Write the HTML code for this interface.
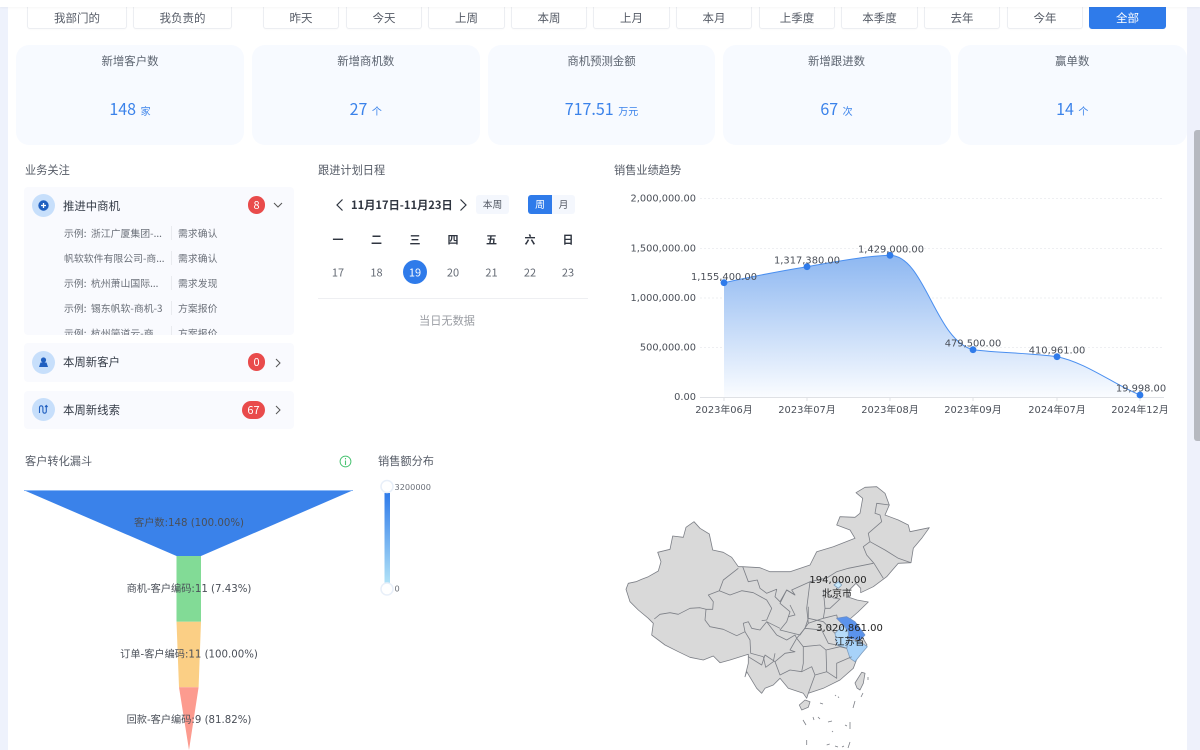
<!DOCTYPE html>
<html lang="zh"><head><meta charset="utf-8"><title>Dashboard</title>
<style>
html,body{margin:0;padding:0;width:1200px;height:750px;overflow:hidden;background:#fff}
body{position:relative;font-family:"Noto Sans CJK SC","Liberation Sans",sans-serif;color:#555b66}
.a{position:absolute;white-space:nowrap}
.c{position:absolute;white-space:nowrap;transform:translate(-50%,-50%);line-height:1}
.btn{position:absolute;top:-8px;height:37px;background:#fff;border:1px solid #eceef2;border-radius:3px;box-sizing:border-box;font-size:11.5px;color:#555b66;text-align:center;line-height:50px;box-shadow:0 1px 1px rgba(0,0,0,.02)}
.card{position:absolute;top:45px;height:100px;background:#f7faff;border-radius:13px}
.card .t{position:absolute;top:8px;left:0;right:0;text-align:center;font-size:11.4px;line-height:16px;color:#5c6470}
.card .n{position:absolute;top:52px;left:0;right:0;text-align:center;font-size:16px;line-height:22px;color:#3a82ea}
.card .n span{font-size:10px;margin-left:1px}
.h{position:absolute;font-size:11.2px;line-height:14px;color:#555b66;white-space:nowrap}
.panel{position:absolute;left:24px;width:270px;background:#f9fafe;border-radius:4px;overflow:hidden}
.ic{position:absolute;left:8px;width:23px;height:23px;border-radius:50%;background:#c7dffb}
.pt{position:absolute;left:39px;font-size:11.4px;line-height:16px;color:#333a46;white-space:nowrap}
.bd{position:absolute;height:18px;border-radius:9px;background:#e94b4b;color:#fff;font-size:11px;line-height:18px;text-align:center}
.r{position:absolute;left:40px;font-size:9.9px;line-height:14px;color:#6b7079;white-space:nowrap}
.s{position:absolute;left:154px;font-size:9.9px;line-height:14px;color:#6b7079;white-space:nowrap}
.d{position:absolute;left:147px;width:1px;height:14px;background:#e9ebef}
.wk{font-size:11px;font-weight:700;color:#2f3540}
.dt{font-size:11px;color:#666c76}
</style></head><body>

<!-- page gutters -->
<div class="a" style="left:0;top:7px;width:8px;height:743px;background:#eef2fc"></div>
<div class="a" style="left:1186.500px;top:7px;width:13.500px;height:743px;background:#eef1fb"></div>
<div class="a" style="left:1193.500px;top:130px;width:6.500px;height:311px;background:#b6b9c0;border-radius:3px 0 0 3px"></div>

<!-- buttons -->
<div class="btn" style="left:27px;width:100px">我部门的</div>
<div class="btn" style="left:133px;width:99px">我负责的</div>
<div class="btn" style="left:263px;width:76px">昨天</div>
<div class="btn" style="left:346px;width:76px">今天</div>
<div class="btn" style="left:428px;width:77px">上周</div>
<div class="btn" style="left:511px;width:76px">本周</div>
<div class="btn" style="left:593px;width:77px">上月</div>
<div class="btn" style="left:676px;width:76px">本月</div>
<div class="btn" style="left:759px;width:76px">上季度</div>
<div class="btn" style="left:841px;width:77px">本季度</div>
<div class="btn" style="left:924px;width:76px">去年</div>
<div class="btn" style="left:1007px;width:76px">今年</div>
<div class="btn" style="left:1089px;width:77px;background:#2f7bea;border-color:#2f7bea;color:#fff">全部</div>
<div class="a" style="left:0;top:0;width:1200px;height:7px;background:#fff;box-shadow:0 1px 2px rgba(0,0,0,.04)"></div>

<!-- stat cards -->
<div class="card" style="left:16px;width:228px"><div class="t">新增客户数</div><div class="n">148 <span>家</span></div></div>
<div class="card" style="left:252px;width:227.500px"><div class="t">新增商机数</div><div class="n">27 <span>个</span></div></div>
<div class="card" style="left:488px;width:227px"><div class="t">商机预测金额</div><div class="n">717.51 <span>万元</span></div></div>
<div class="card" style="left:722.500px;width:228px"><div class="t">新增跟进数</div><div class="n">67 <span>次</span></div></div>
<div class="card" style="left:958px;width:228.500px"><div class="t">赢单数</div><div class="n">14 <span>个</span></div></div>

<!-- business focus -->
<div class="h" style="left:25px;top:163px">业务关注</div>
<div class="panel" style="top:187px;height:148px">
  <div class="ic" style="top:7px"><svg width="23" height="23" viewBox="0 0 23 23"><circle cx="11.500" cy="11.500" r="5.200" fill="#1f5fc0"/><path d="M11.500 9v5M9 11.500h5" stroke="#fff" stroke-width="1.300"/></svg></div>
  <div class="pt" style="top:11px">推进中商机</div>
  <div class="bd" style="left:224px;top:9px;width:17px">8</div>
  <svg class="a" style="left:248px;top:13px" width="12" height="10" viewBox="0 0 12 10"><path d="M2 3l4 4 4-4" fill="none" stroke="#555" stroke-width="1"/></svg>
  <div class="r" style="top:39px">示例:&nbsp;&nbsp;浙江广厦集团-...</div><div class="d" style="top:39px"></div><div class="s" style="top:39px">需求确认</div>
  <div class="r" style="top:64px">帆软软件有限公司-商...</div><div class="d" style="top:64px"></div><div class="s" style="top:64px">需求确认</div>
  <div class="r" style="top:89px">示例:&nbsp;&nbsp;杭州萧山国际...</div><div class="d" style="top:89px"></div><div class="s" style="top:89px">需求发现</div>
  <div class="r" style="top:114px">示例:&nbsp;&nbsp;锡东帆软-商机-3</div><div class="d" style="top:114px"></div><div class="s" style="top:114px">方案报价</div>
  <div class="r" style="top:139px">示例:&nbsp;&nbsp;杭州简道云-商...</div><div class="d" style="top:139px"></div><div class="s" style="top:139px">方案报价</div>
</div>
<div class="panel" style="top:343px;height:39px">
  <div class="ic" style="top:8px"><svg width="23" height="23" viewBox="0 0 23 23"><circle cx="11.500" cy="9" r="2.600" fill="#1f5fc0"/><path d="M7 16l1.500-4.500h6L16 16z" fill="#1f5fc0"/></svg></div>
  <div class="pt" style="top:11px">本周新客户</div>
  <div class="bd" style="left:224px;top:10px;width:17px">0</div>
  <svg class="a" style="left:248px;top:14px" width="12" height="12" viewBox="0 0 12 12"><path d="M4 2l4 4-4 4" fill="none" stroke="#555" stroke-width="1"/></svg>
</div>
<div class="panel" style="top:391px;height:38px">
  <div class="ic" style="top:7px"><svg width="23" height="23" viewBox="0 0 23 23"><path d="M7.500 15V9.500a1.700 1.700 0 0 1 3.400 0v4a1.700 1.700 0 0 0 3.400 0V8M13 9l1.300-1.500L15.600 9" fill="none" stroke="#1f5fc0" stroke-width="1.100"/></svg></div>
  <div class="pt" style="top:11px">本周新线索</div>
  <div class="bd" style="left:218px;top:10px;width:23px">67</div>
  <svg class="a" style="left:248px;top:13px" width="12" height="12" viewBox="0 0 12 12"><path d="M4 2l4 4-4 4" fill="none" stroke="#555" stroke-width="1"/></svg>
</div>

<!-- calendar -->
<div class="h" style="left:318px;top:163px">跟进计划日程</div>
<svg class="a" style="left:334px;top:197px" width="12" height="16" viewBox="0 0 12 16"><path d="M8.500 2.500L3 8l5.500 5.500" fill="none" stroke="#2f3540" stroke-width="1.200"/></svg>
<div class="a" style="left:351px;top:197px;font-size:11.200px;line-height:16px;font-weight:700;color:#2f3540">11月17日-11月23日</div>
<svg class="a" style="left:457px;top:197px" width="12" height="16" viewBox="0 0 12 16"><path d="M3.500 2.500L9 8l-5.500 5.500" fill="none" stroke="#2f3540" stroke-width="1.200"/></svg>
<div class="a" style="left:476px;top:195px;width:33px;height:19px;background:#f4f7fd;border-radius:3px;font-size:9.800px;line-height:19px;text-align:center;color:#555b66">本周</div>
<div class="a" style="left:552px;top:195px;width:23px;height:19px;background:#f4f7fd;border-radius:0 3px 3px 0;font-size:9.800px;line-height:19px;text-align:center;color:#555b66">月</div>
<div class="a" style="left:528px;top:195px;width:24px;height:19px;background:#2f7bea;border-radius:3px 0 0 3px;font-size:9.800px;line-height:19px;text-align:center;color:#fff">周</div>
<div class="c wk" style="left:338px;top:240px">一</div>
<div class="c wk" style="left:376.500px;top:240px">二</div>
<div class="c wk" style="left:415px;top:240px">三</div>
<div class="c wk" style="left:453px;top:240px">四</div>
<div class="c wk" style="left:491.500px;top:240px">五</div>
<div class="c wk" style="left:530px;top:240px">六</div>
<div class="c wk" style="left:568px;top:240px">日</div>
<div class="a" style="left:403px;top:260px;width:24px;height:24px;border-radius:50%;background:#2f7bea"></div>
<div class="c dt" style="left:338px;top:272.500px">17</div>
<div class="c dt" style="left:376.500px;top:272.500px">18</div>
<div class="c dt" style="left:415px;top:272.500px;color:#fff">19</div>
<div class="c dt" style="left:453px;top:272.500px">20</div>
<div class="c dt" style="left:491.500px;top:272.500px">21</div>
<div class="c dt" style="left:530px;top:272.500px">22</div>
<div class="c dt" style="left:568px;top:272.500px">23</div>
<div class="a" style="left:318px;top:298px;width:270px;height:1px;background:#eeeff2"></div>
<div class="c" style="left:447px;top:321px;font-size:11.200px;color:#9a9da3">当日无数据</div>

<div class="h" style="left:614px;top:163px">销售业绩趋势</div>
<div class="h" style="left:25px;top:454px">客户转化漏斗</div>
<svg class="a" style="left:338.500px;top:454.500px" width="13" height="13" viewBox="0 0 13 13"><circle cx="6.500" cy="6.500" r="5.400" fill="none" stroke="#4cc474" stroke-width="1"/><path d="M6.500 5.500V10M6.500 3v1.400" stroke="#4cc474" stroke-width="1.100"/></svg>
<div class="h" style="left:378px;top:454px">销售额分布</div>

<!-- charts -->
<svg class="a" style="left:0;top:0" width="1200" height="750" viewBox="0 0 1200 750">
<defs>
<linearGradient id="ar" x1="0" y1="255" x2="0" y2="397" gradientUnits="userSpaceOnUse"><stop offset="0" stop-color="#8db7f1"/><stop offset="1" stop-color="#fafcff"/></linearGradient>
<linearGradient id="vm" x1="0" y1="0" x2="0" y2="1"><stop offset="0" stop-color="#2f7bea"/><stop offset="1" stop-color="#b2e3f7"/></linearGradient>
</defs>
<g stroke="#eeeff2" stroke-width="1" stroke-dasharray="2 2">
<path d="M700 198.500H1164M700 248.500H1164M700 298H1164M700 347.500H1164"/>
</g>
<path d="M724 282.700C755 276 780 271 807 266.700C850 259 870 256 890 255.300C925 256 935 340 973 349.700C1000 353 1030 353 1057 356.700C1085 362 1115 385 1140 395V397H724Z" fill="url(#ar)"/>
<path d="M724 282.700C755 276 780 271 807 266.700C850 259 870 256 890 255.300C925 256 935 340 973 349.700C1000 353 1030 353 1057 356.700C1085 362 1115 385 1140 395" fill="none" stroke="#4a8ff0" stroke-width="1"/>
<path d="M700 397.500H1164M724 397v4M807 397v4M890 397v4M973 397v4M1057 397v4M1140 397v4" stroke="#dfe1e5" fill="none"/>
<g fill="#2f7bea"><circle cx="724" cy="282.700" r="3.400"/><circle cx="807" cy="266.700" r="3.400"/><circle cx="890" cy="255.300" r="3.400"/><circle cx="973" cy="349.700" r="3.400"/><circle cx="1057" cy="356.700" r="3.400"/><circle cx="1140" cy="395" r="3.400"/></g>
<g font-family="'DejaVu Sans','Noto Sans CJK SC',sans-serif" font-size="9.800" fill="#4a4f58" text-anchor="end">
<text x="696" y="201.500">2,000,000.00</text><text x="696" y="251.500">1,500,000.00</text><text x="696" y="301">1,000,000.00</text><text x="696" y="350.500">500,000.00</text><text x="696" y="400">0.00</text>
</g>
<g font-family="'DejaVu Sans','Noto Sans CJK SC',sans-serif" font-size="9.900" fill="#4a4f58" text-anchor="middle">
<text x="724" y="413">2023年06月</text><text x="807" y="413">2023年07月</text><text x="890" y="413">2023年08月</text><text x="973" y="413">2023年09月</text><text x="1057" y="413">2024年07月</text><text x="1140" y="413">2024年12月</text>
<text x="724" y="280">1,155,400.00</text><text x="807" y="263.500">1,317,380.00</text><text x="891" y="252.500">1,429,000.00</text><text x="973" y="346.500">479,500.00</text><text x="1057" y="353.500">410,961.00</text><text x="1141" y="391.500">19,998.00</text>
</g>

<!-- funnel -->
<path d="M24 490.300H353L201 556H176.500Z" fill="#3a82ea"/>
<path d="M24 490.500H353" stroke="#8bb8f5" stroke-width="1"/>
<path d="M176.500 556H201V621.700H176.500Z" fill="#82db96"/>
<path d="M176.500 621.700H201L198.600 687.300H179Z" fill="#fbcf85"/>
<path d="M179 687.300H198.600L189 750Z" fill="#fc9b8f"/>
<g font-family="'DejaVu Sans','Noto Sans CJK SC',sans-serif" font-size="10.200" fill="#4a4f58" text-anchor="middle">
<text x="189" y="526">客户数:148 (100.00%)</text>
<text x="189" y="592">商机-客户编码:11 (7.43%)</text>
<text x="189" y="657.500">订单-客户编码:11 (100.00%)</text>
<text x="189" y="723">回款-客户编码:9 (81.82%)</text>
</g>

<!-- visual map -->
<rect x="384.500" y="493" width="5.500" height="91" fill="url(#vm)"/>
<circle cx="387" cy="486.500" r="6" fill="#fff" stroke="#e8eff9" stroke-width="1.500"/>
<circle cx="387" cy="589" r="6" fill="#fff" stroke="#e8eff9" stroke-width="1.500"/>
<g font-family="'DejaVu Sans',sans-serif" font-size="8.200" fill="#6b7079"><text x="394.500" y="490">3200000</text><text x="394.500" y="591.500">0</text></g>

<!-- china map -->
<g stroke="#7c7f86" stroke-width=".8" stroke-linejoin="round" fill="none">
<path fill="#d9d9d9" d="M626 589.300L628.300 583.300L636 581.700L641.700 579.300L648.300 576.700L658.300 571L661 561.700L657.700 552.300L670 549.300L672.700 536L683.300 537.300L686 527.300L694 521.700L700 528.300L709.300 534L712.700 550L723.300 552.300L731.700 557.300L738.300 566.700L742.700 566.700L760 567.700L770 571.700L790 571.700L810 565L816.700 551.700L833.300 546.700L855 538.300L850 530L836.700 525L840 516.700L855 517.300L860 513.300L862.700 498.300L856 492.700L865 487.300L876.700 486.700L885 493.300L889.300 505L885 515L898.300 520L908.300 525L910 531.700L929.300 527.700L921.700 538.300L913.300 548.300L911 562.700L898.300 563.300L886.700 576.700L873.300 586.700L860.700 592.700L860.700 588.300L856 583.300L850 589.300L848 597L857 600L868.300 602L858 612L850 619L858 625L864 640L867 645L862 652L858.300 655L853.300 668.300L840 680L823.300 688.300L808.300 693.300L806.700 698.300L803.300 693.300L788.300 688.300L780 678.300L773.300 685L765 688.300L761.700 693.300L756.700 688.300L746.700 671.700L745 676.700L748.300 663.300L748.300 654.300L730 660L720 662.700L713.300 656L703.300 660L690 657.300L678.300 651.700L665 645L651.700 635L653.300 623.300L648.300 618.300L638.300 610L630 601.700Z"/>
<path fill="#d9d9d9" d="M799.300 705L805 700L810 701.700L808.300 707.300L801.700 710Z"/>
<path fill="#d9d9d9" d="M855 683L861.700 672.300L865 673.300L863.300 683.300L860 690L857 688Z"/>
<path fill="#5b93ec" stroke="#6b8fc9" d="M836.700 618.300L846.700 616.700L855 621.700L865 635L860 640L848.300 638.300L848.300 631.700L843.300 625Z"/>
<path fill="#b6dbf9" stroke="#7f9dbd" d="M835 633.300L843.300 625L848.300 631.700L848.300 638.300L846.700 648.300L836.700 645Z"/>
<path fill="#a7d2f9" stroke="#7f9dbd" d="M846.700 648.300L849 640L860 641.700L867.300 646.700L861.700 653.300L855 661.700L850 658.300Z"/>
<path fill="#c9e9fa" stroke="#7f9dbd" d="M834 585L838.300 581.700L841.700 585L838.300 588.300Z"/>
<path d="M654.300 619L660 614.300L670 612.700L678.300 614.300L690 608.300L700 607.700L706 609.300L712.700 609.300L713.300 601.700L708.300 595L719.300 590.700L723.300 580L738.300 568.300"/>
<path d="M706 609.300L705 620L710 626.700L723.300 629.300L736.700 635.700L745 631.700L743.300 623.300L748.300 621.700L751.700 628.300L760 630L766.700 621.700L780 628.300"/>
<path d="M745 631.700L750 640L750.700 653.300L763.300 656.700L765.700 667.300L773.300 661.700L775 653.300"/>
<path d="M719.300 590.700L730 595L741.700 590.700L753.300 592.700L766.700 600L771.700 608.300L766.700 620L761.700 620.700"/>
<path d="M742.700 566.700L748.300 581.700L757.300 580L760 588.300L766.700 593.300L776.700 589.300L775 596.700L780 601.700L786.700 590L795 595L791.700 590L810 581.700L826.700 578L836.700 571.700L848.300 568.300L873.300 563.300"/>
<path d="M889.300 505L876.700 503.300L875 513.300L880 515L881.700 521.700L868.300 533.300L870 541.700L863.300 546.700L866.700 555L874 563.300L883.300 578.300"/>
<path d="M870 541.700L885 550L898.300 558.300L911 562.700"/>
<path d="M748.300 656.700L761.700 665L765 655L775 661.700L780 675L790 670L801.700 671.700L803.300 663.300L803.300 646.700L820 645L826 650L826.700 671.700L815 675L811.700 666.700L801.700 671.700M815 675L808.300 693.300M826.700 671.700L836.700 678.300L836.700 663.300L851.700 656.700"/>
<path d="M776.700 635L786.700 640L795 635L796.700 638.300L790 650L795 651.700L785 653.300L775 661.700M766.700 621.700L776.700 635"/>
<path d="M826 650L840 646.700L846.700 648.300M803.300 646.700L796.700 638.300L805 628.300L821.700 630L828.300 643.300L836.700 645M805 628.300L808.300 618.300L808.300 606.700M808.300 618.300L823.300 621.700L835 633.300"/>
<path d="M810 581.700L806.700 608.300L808.300 623.300L823.300 618.300L825 608.300L823.300 590L833.300 598L840 599L830 608.300L825 608.300M823.300 618.300L836.700 615L837.300 617.700L836.700 618.300"/>
<path d="M795 595L786.700 590L780 603.300L790 611.700L786.700 621.700L780 630L800 635L808.300 623.300"/>
<path d="M790 605L795 615L788.300 616.700"/>
<path d="M868 677v3M863 693l-2 4M853 708l2-7M835 695l1 1M838 696.700l1 1M820 703l3 1M803 720l3 5M813 717l1 3M818 717l2 2M828 722l4-1M845 725l2 1M850 722v7M832 731l1 1M806.700 740v5M826.700 745l3-1M835 746l3 1M842 747l2-1M850 742l-2 6"/>
</g>
<g font-family="'DejaVu Sans','Noto Sans CJK SC',sans-serif" font-size="10" fill="#222" text-anchor="middle">
<text x="838" y="583">194,000.00</text><text x="837" y="597">北京市</text>
<text x="849.500" y="631">3,020,861.00</text><text x="849.500" y="645">江苏省</text>
</g>
</svg>
</body></html>
